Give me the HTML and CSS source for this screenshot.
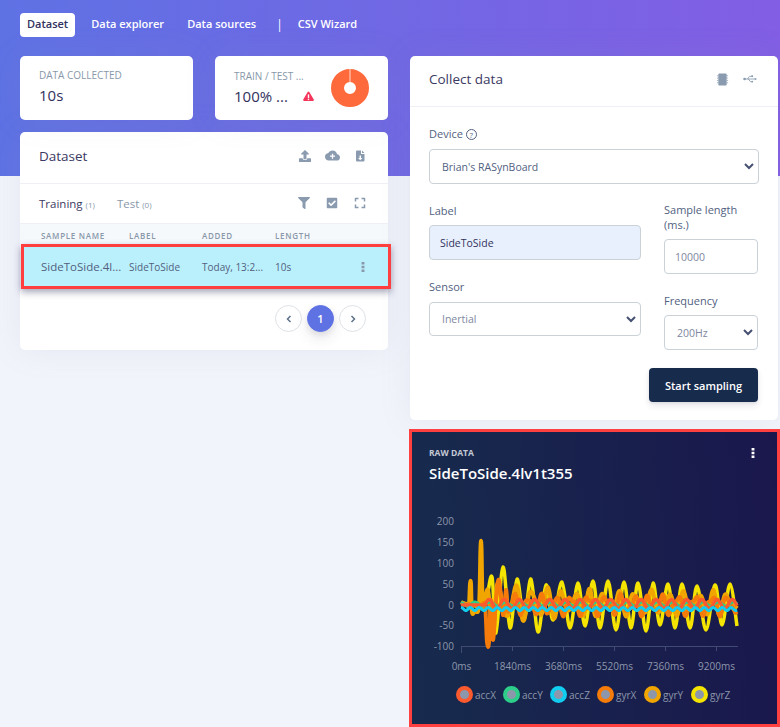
FILE: index.html
```html
<!DOCTYPE html>
<html lang="en">
<head>
    <meta charset="UTF-8">
    <meta name="viewport" content="width=device-width, initial-scale=1.0">
    <title>Data acquisition</title>
    <link rel="stylesheet" href="styles.css">
</head>
<body>
    <nav class="tabs">
        <a class="tab active">Dataset</a>
        <a class="tab">Data explorer</a>
        <a class="tab">Data sources</a>
        <span class="tab-sep">|</span>
        <a class="tab">CSV Wizard</a>
    </nav>

    <main class="columns">
        <section class="left-col">
            <div class="stats">
                <div class="card stat">
                    <div class="stat-label">DATA COLLECTED</div>
                    <div class="stat-value">10s</div>
                </div>
                <div class="card stat stat-split">
                    <div class="stat-text">
                        <div class="stat-label">TRAIN / TEST ...</div>
                        <div class="stat-value">100% ...
                            <svg class="warn" viewBox="0 0 24 22"><path fill="#f5365c" d="M12 1c.8 0 1.4.4 1.8 1.1l9.8 16.8c.8 1.4-.2 3.1-1.8 3.1H2.2C.6 22-.4 20.3.4 18.9L10.2 2.1C10.6 1.4 11.2 1 12 1z"/><rect x="10.5" y="7.5" width="3" height="8" fill="#fff"/><rect x="10.5" y="17" width="3" height="3" fill="#fff"/></svg>
                        </div>
                    </div>
                    <svg class="donut" viewBox="0 0 38 38">
                        <circle cx="19" cy="19" r="12.5" fill="none" stroke="#ff6a3d" stroke-width="13"/>
                        <rect x="18.5" y="0" width="1" height="13" fill="#ffd9cc"/>
                    </svg>
                </div>
            </div>

            <div class="card dataset">
                <div class="card-head dataset-head">
                    <h3>Dataset</h3>
                    <div class="head-icons">
                        <svg class="icon" viewBox="0 0 512 512"><path d="M296 384h-80c-13.3 0-24-10.7-24-24V192h-87.7c-17.8 0-26.7-21.5-14.1-34.1L242.3 5.7c7.5-7.5 19.8-7.5 27.3 0l152.2 152.2c12.6 12.6 3.7 34.1-14.1 34.1H320v168c0 13.3-10.7 24-24 24zm216-8v112c0 13.3-10.7 24-24 24H24c-13.3 0-24-10.7-24-24V376c0-13.3 10.7-24 24-24h136v8c0 30.9 25.1 56 56 56h80c30.9 0 56-25.1 56-56v-8h136c13.3 0 24 10.7 24 24z"/></svg>
                        <svg class="icon icon-wide" viewBox="0 0 24 24"><path fill-rule="evenodd" d="M19.35 10.04C18.67 6.59 15.64 4 12 4 9.11 4 6.6 5.64 5.35 8.04 2.34 8.36 0 10.91 0 14c0 3.31 2.69 6 6 6h13c2.76 0 5-2.24 5-5 0-2.64-2.05-4.78-4.65-4.96zM13 12h3v2h-3v3h-2v-3H8v-2h3V9h2z"/></svg>
                        <svg class="icon" viewBox="0 0 24 24"><path fill-rule="evenodd" d="M6 1h8v7h7v13a2 2 0 0 1-2 2H6a2 2 0 0 1-2-2V3a2 2 0 0 1 2-2zm5 10v5H8l4.5 4.5L17 16h-3v-5zM16 1l5 5h-5z"/></svg>
                    </div>
                </div>
                <div class="subtabs">
                    <span class="subtab current">Training <small>(1)</small></span>
                    <span class="subtab">Test <small>(0)</small></span>
                    <div class="head-icons">
                        <svg class="icon" viewBox="0 0 512 512"><path d="M487.976 0H24.028C2.71 0-8.047 25.866 7.058 40.971L192 225.941V432c0 7.831 3.821 15.17 10.237 19.662l80 55.98C298.02 518.69 320 507.493 320 487.98V225.941l184.947-184.97C520.021 25.896 509.338 0 487.976 0z"/></svg>
                        <svg class="icon" viewBox="0 0 448 512"><path d="M400 480H48c-26.51 0-48-21.49-48-48V80c0-26.51 21.49-48 48-48h352c26.51 0 48 21.49 48 48v352c0 26.51-21.49 48-48 48zm-204.686-98.059l184-184c6.248-6.248 6.248-16.379 0-22.627l-22.627-22.627c-6.248-6.248-16.379-6.249-22.628 0L184 302.745l-70.059-70.059c-6.248-6.248-16.379-6.248-22.628 0l-22.627 22.627c-6.248 6.248-6.248 16.379 0 22.627l104 104c6.249 6.25 16.379 6.25 22.628.001z"/></svg>
                        <svg class="icon" viewBox="0 0 448 512"><path d="M0 180V56c0-13.3 10.7-24 24-24h124c6.6 0 12 5.4 12 12v40c0 6.6-5.4 12-12 12H64v84c0 6.6-5.4 12-12 12H12c-6.6 0-12-5.4-12-12zM288 44v40c0 6.6 5.4 12 12 12h84v84c0 6.6 5.4 12 12 12h40c6.6 0 12-5.4 12-12V56c0-13.3-10.7-24-24-24H300c-6.6 0-12 5.4-12 12zm148 276h-40c-6.6 0-12 5.4-12 12v84h-84c-6.6 0-12 5.4-12 12v40c0 6.6 5.4 12 12 12h124c13.3 0 24-10.7 24-24V332c0-6.6-5.4-12-12-12zM160 468v-40c0-6.6-5.4-12-12-12H64v-84c0-6.6-5.4-12-12-12H12c-6.6 0-12 5.4-12 12v124c0 13.3 10.7 24 24 24h124c6.6 0 12-5.4 12-12z"/></svg>
                    </div>
                </div>
                <div class="table-head">
                    <span class="col-name">SAMPLE NAME</span>
                    <span class="col-label">LABEL</span>
                    <span class="col-added">ADDED</span>
                    <span class="col-length">LENGTH</span>
                </div>
                <div class="table-row">
                    <span class="col-name row-name">SideToSide.4l...</span>
                    <span class="col-label">SideToSide</span>
                    <span class="col-added">Today, 13:2...</span>
                    <span class="col-length">10s</span>
                    <svg class="kebab" viewBox="0 0 4 14"><rect y="0" width="4" height="3.5" x="0"/><rect y="5.25" width="4" height="3.5" x="0"/><rect y="10.5" width="4" height="3.5" x="0"/></svg>
                </div>
                <div class="pager">
                    <button class="page-btn"><svg viewBox="0 0 8 10"><path d="M6 1 2 5l4 4" fill="none" stroke="#5e7289" stroke-width="2"/></svg></button>
                    <button class="page-btn page-on">1</button>
                    <button class="page-btn"><svg viewBox="0 0 8 10"><path d="M2 1l4 4-4 4" fill="none" stroke="#5e7289" stroke-width="2"/></svg></button>
                </div>
            </div>
        </section>

        <section class="right-col">
            <div class="card collect">
                <div class="card-head collect-head">
                    <h3>Collect data</h3>
                    <div class="head-icons head-icons-small">
                        <svg class="icon icon-chip" viewBox="0 0 14 14"><path d="M2.5 1.5a1 1 0 0 1 1-1h7a1 1 0 0 1 1 1v11a1 1 0 0 1-1 1h-7a1 1 0 0 1-1-1z"/><path d="M1 3h1.5M1 5.5h1.5M1 8h1.5M1 10.5h1.5M11.5 3H13M11.5 5.5H13M11.5 8H13M11.5 10.5H13" stroke="#8a9bb0" stroke-width=".8"/></svg>
                        <svg class="icon icon-usb" viewBox="0 0 16 12"><circle cx="1.8" cy="6" r="1.5"/><path d="M2 6h12M5 6l2.5-3H10M6 6l2.5 3H10" fill="none" stroke="#8a9bb0"/><rect x="9.5" y="1.8" width="2" height="2"/><circle cx="10.5" cy="9" r="1.1"/><path d="M13.5 4.5 16 6l-2.5 1.500z"/></svg>
                    </div>
                </div>
                <div class="form">
                    <label class="field-label">Device <span class="help">?</span></label>
                    <select class="control">
                        <option>Brian's RASynBoard</option>
                    </select>
                    <div class="form-cols">
                        <div class="form-col-main">
                            <label class="field-label label-first">Label</label>
                            <input class="control control-filled" type="text" value="SideToSide">
                            <label class="field-label label-sensor">Sensor</label>
                            <select class="control control-muted">
                                <option>Inertial</option>
                            </select>
                        </div>
                        <div class="form-col-side">
                            <label class="field-label label-length">Sample length (ms.)</label>
                            <input class="control control-muted" type="text" value="10000">
                            <label class="field-label label-freq">Frequency</label>
                            <select class="control control-muted">
                                <option>200Hz</option>
                            </select>
                        </div>
                    </div>
                    <div class="form-actions">
                        <button class="start-btn">Start sampling</button>
                    </div>
                </div>
            </div>

            <div class="raw-card">
                <div class="raw-head">
                    <div>
                        <div class="raw-over">RAW DATA</div>
                        <div class="raw-title">SideToSide.4lv1t355</div>
                    </div>
                    <svg class="kebab kebab-light" viewBox="0 0 4 14"><rect y="0" width="4" height="3.5" x="0"/><rect y="5.25" width="4" height="3.5" x="0"/><rect y="10.5" width="4" height="3.5" x="0"/></svg>
                </div>
                <!-- viewBox uses page coordinates so the axis values are easy to read off -->
                <svg id="chart" class="chart" viewBox="412 510 365 165">
                    <g class="axis-y" text-anchor="end">
                        <text x="454" y="525">200</text>
                        <text x="454" y="546">150</text>
                        <text x="454" y="567">100</text>
                        <text x="454" y="588">50</text>
                        <text x="454" y="609">0</text>
                        <text x="454" y="629">-50</text>
                        <text x="454" y="650">-100</text>
                    </g>
                    <path class="axis-line" d="M461 646.5H738M461.5 646v7M512.5 646v5M563.5 646v5M614.5 646v5M665.5 646v5M716.5 646v5"/>
                    <g class="axis-x" text-anchor="middle">
                        <text x="461.5" y="670">0ms</text>
                        <text x="512.5" y="670">1840ms</text>
                        <text x="563.5" y="670">3680ms</text>
                        <text x="614.5" y="670">5520ms</text>
                        <text x="665.5" y="670">7360ms</text>
                        <text x="716.5" y="670">9200ms</text>
                    </g>
                </svg>
                <div class="legend">
                    <span class="legend-item"><i class="dot dot-accx"></i>accX</span>
                    <span class="legend-item"><i class="dot dot-accy"></i>accY</span>
                    <span class="legend-item"><i class="dot dot-accz"></i>accZ</span>
                    <span class="legend-item"><i class="dot dot-gyrx"></i>gyrX</span>
                    <span class="legend-item"><i class="dot dot-gyry"></i>gyrY</span>
                    <span class="legend-item"><i class="dot dot-gyrz"></i>gyrZ</span>
                </div>
            </div>
        </section>
    </main>

    <script src="chart.js"></script>
</body>
</html>
```

FILE: styles.css
```css
/* Base */
html, body {
    margin: 0;
    padding: 0;
    height: 727px;
    overflow: hidden;
}

body {
    font-family: "Open Sans", sans-serif;
    color: #32325d;
    background: linear-gradient(87deg, #5e72e4, #825ee4) no-repeat top / 100% 176px, #f2f4fb;
}

/* Top tabs */
.tabs {
    display: flex;
    align-items: center;
    height: 24px;
    padding: 13px 20px 0;
}

.tab {
    font-size: 11px;
    font-weight: 600;
    color: #fff;
    padding: 3px 7px 5px;
    margin-right: 9px;
    line-height: 16px;
}

.tab.active {
    background: #fff;
    color: #32325d;
    border-radius: 4px;
}

.tab-sep {
    color: #fff;
    font-size: 12px;
    margin: -2px 8px 0 4px;
}

/* Layout */
.columns {
    display: grid;
    grid-template-columns: 368px 368px;
    gap: 22px;
    padding: 19px 0 0 20px;
}

.card {
    background: #fff;
    border-radius: 5px;
    box-shadow: 0 0 2rem 0 rgba(136, 152, 170, .12);
}

.stats {
    display: flex;
    justify-content: space-between;
    margin-bottom: 12px;
}

.stat {
    width: 173px;
    height: 64px;
    box-sizing: border-box;
    padding: 12px 19px;
}

.stat-split {
    display: flex;
    justify-content: space-between;
    align-items: center;
    padding-right: 0;
}

.stat-text {
    flex: 1;
}

.stat-label {
    font-size: 10px;
    font-weight: 500;
    color: #8898aa;
    line-height: 15px;
}

.stat-value {
    font-size: 15px;
    line-height: 23px;
    margin-top: 1px;
    display: flex;
    align-items: center;
}

.warn {
    width: 11px;
    height: 10px;
    margin-left: 15px;
}

.donut {
    width: 38px;
    height: 38px;
    margin-right: 19px;
}

/* Card header */
.card-head {
    display: flex;
    align-items: center;
    justify-content: space-between;
    padding: 0 22px 4px 19px;
    border-bottom: 1px solid #eef0f5;
}

.dataset-head {
    height: 47px;
}

.collect-head {
    height: 46px;
    padding-right: 19px;
}

.card-head h3 {
    margin: 0;
    font-size: 13.5px;
    font-weight: 500;
    color: #3b3a62;
}

.head-icons {
    display: flex;
    align-items: center;
    gap: 16px;
    margin-left: auto;
}

.card-head .head-icons {
    gap: 14px;
}

.icon {
    width: 12px;
    height: 12px;
    fill: #8a9bb0;
}

.icon-wide {
    width: 15px;
    height: 15px;
}

.icon-chip {
    width: 13px;
    height: 13px;
}

.icon-usb {
    width: 14px;
    height: 12px;
}

.head-icons-small {
    margin-right: 2px;
}

/* Dataset card */
.dataset {
    height: 218px;
}

.subtabs {
    display: flex;
    align-items: center;
    height: 38px;
    padding: 0 22px 1px 19px;
}

.subtab {
    font-size: 11.5px;
    color: #8898aa;
    margin-right: 22px;
}

.subtab.current {
    color: #3b3a62;
}

.subtab small {
    font-size: 8px;
    color: #8898aa;
}

.table-head {
    display: flex;
    align-items: center;
    height: 17px;
    padding-top: 3px;
    background: #f6f9fc;
    border-top: 1px solid #eef0f5;
    font-size: 8px;
    font-weight: 600;
    letter-spacing: .7px;
    color: #8898aa;
}

.col-name { width: 88px; margin-left: 21px; }
.col-label { width: 73px; }
.col-added { width: 73px; }
.col-length { width: 40px; }

.table-row {
    display: flex;
    align-items: center;
    box-sizing: border-box;
    height: 45px;
    margin: 0 -3px 0 1px;
    border: 3px solid #ff3f3f;
    background: #baf0fc;
    box-shadow: 0 3px 7px rgba(50, 50, 93, .45);
    font-size: 10px;
    color: #525f7f;
}

.table-row .col-name {
    margin-left: 17px;
}

.row-name {
    font-size: 11.5px;
    font-weight: 500;
}

.kebab {
    width: 4px;
    height: 10px;
    margin-left: 46px;
    fill: #8a98ab;
}

.pager {
    display: flex;
    justify-content: flex-end;
    gap: 5px;
    padding: 16px 22px 0 0;
}

.page-btn {
    width: 27px;
    height: 27px;
    padding: 0;
    border: 1px solid #dee2e6;
    border-radius: 50%;
    background: #fff;
    font-family: inherit;
    font-size: 11px;
    display: flex;
    align-items: center;
    justify-content: center;
}

.page-btn svg {
    width: 6px;
    height: 8px;
}

.page-on {
    background: #5e72e4;
    border-color: #5e72e4;
    color: #fff;
    font-weight: 600;
    box-shadow: 0 7px 14px rgba(50, 50, 93, .1), 0 3px 6px rgba(0, 0, 0, .08);
}

/* Collect data card */
.collect {
    height: 364px;
}

.form {
    padding: 19px 19px 0;
}

.field-label {
    display: block;
    font-size: 11px;
    line-height: 16px;
    color: #525f7f;
    margin-bottom: 7px;
}

.help {
    display: inline-block;
    box-sizing: border-box;
    width: 11px;
    height: 11px;
    line-height: 9px;
    border: 1px solid #525f7f;
    border-radius: 50%;
    font-size: 8px;
    text-align: center;
}

.control {
    display: block;
    box-sizing: border-box;
    width: 100%;
    height: 35px;
    padding: 0 10px;
    border: 1px solid #cad1d7;
    border-radius: 4px;
    background: #fff;
    font-family: inherit;
    font-size: 10.5px;
    color: #525f7f;
    outline: none;
}

select.control {
    appearance: none;
    padding: 0 24px 0 12px;
    background: #fff url("data:image/svg+xml,%3Csvg xmlns='http://www.w3.org/2000/svg' width='10' height='7'%3E%3Cpath d='M1 1l4 4 4-4' fill='none' stroke='%23465070' stroke-width='2'/%3E%3C/svg%3E") no-repeat right 4px center;
}

.form > select.control {
    width: 330px;
}

.control-filled {
    background: #e8f0fe;
    color: #32325d;
}

.control-muted {
    color: #8087a0;
}

.form-cols {
    display: flex;
    gap: 23px;
}

.form-col-main {
    width: 212px;
}

.form-col-side {
    width: 94px;
}

.label-first {
    margin: 19px 0 6px;
}

.label-sensor {
    margin-top: 19px;
}

.label-sensor + .control {
    height: 34px;
}

.label-length {
    margin-top: 18px;
    line-height: 15px;
}

.label-freq {
    margin: 19px 0 6px;
}

.form-actions {
    display: flex;
    justify-content: flex-end;
    margin: 18px 1px 0 0;
}

.start-btn {
    width: 109px;
    height: 34px;
    border: 0;
    border-radius: 4px;
    background: #172b4d;
    color: #fff;
    font-family: inherit;
    font-size: 11px;
    font-weight: 600;
    box-shadow: 0 4px 6px rgba(50, 50, 93, .11), 0 1px 3px rgba(0, 0, 0, .08);
}

/* Raw data card */
.raw-card {
    box-sizing: border-box;
    width: 371px;
    height: 298px;
    margin: 9px 0 0 -1px;
    border: 3px solid #ff4040;
    background: linear-gradient(87deg, #172b4d, #1a174d);
    color: #fff;
}

.raw-head {
    display: flex;
    justify-content: space-between;
    padding: 15px 22px 0 17px;
}

.raw-over {
    font-size: 8.5px;
    font-weight: 700;
    color: #c3c8d4;
    line-height: 12px;
}

.raw-title {
    font-size: 15px;
    font-weight: 600;
    line-height: 22px;
    margin-top: 3px;
}

.kebab-light {
    margin: 1px 0 0;
    fill: #fff;
}

.chart {
    display: block;
    width: 365px;
    height: 165px;
    margin-top: 26px;
}

.chart text {
    font-size: 10px;
    fill: #8d97ab;
}

.axis-line {
    stroke: #414a72;
    stroke-width: 1;
    fill: none;
}

/* Legend */
.legend {
    display: flex;
    gap: 5px;
    padding: 11px 0 0 44px;
    font-size: 10px;
    color: #8d97ab;
}

.legend-item {
    display: flex;
    align-items: center;
    width: 42px;
}

.dot {
    box-sizing: border-box;
    width: 17px;
    height: 17px;
    margin-right: 2px;
    flex: none;
    border-radius: 50%;
    border: 4px solid;
    background: #8d97ab;
}

.dot-accx { border-color: #fb5a2e; }
.dot-accy { border-color: #2dce89; }
.dot-accz { border-color: #11cdef; }
.dot-gyrx { border-color: #f57c0a; }
.dot-gyry { border-color: #f0a500; }
.dot-gyrz { border-color: #f5e400; }
```

FILE: chart.js
```js
// Draws the six sensor traces into the raw data chart.
const chart = document.getElementById('chart');
const X_START = 461;
const X_END = 737;
const TWO_PI = Math.PI * 2;

// Yellow trace follows hand-read peaks, so it goes through Catmull-Rom knots
const gyrZ = [[461,603],[470,604],[478,606],[486,600],[492,577],[496,633],[503,567],[510,628],[517,579],[524,620],
    [531,579],[538,632],[546,585],[553,620],[562,582],[570,628],[578,583],[585,626],[593,581],[600,628],
    [608,581],[616,630],[624,582],[631,628],[638,583],[646,631],[653,583],[660,625],[668,584],[675,628],
    [682,584],[690,628],[697,586],[706,630],[715,585],[722,625],[730,584],[737,626]];

function wave(fn) {
    const points = [];
    for (let x = X_START; x <= X_END; x += 1.5) {
        points.push([x, fn(x)]);
    }
    return points;
}

function spikes(points, list) {
    // Replace the early part of a trace with hand-read knots
    const cut = list[list.length - 1][0];
    return list.concat(points.filter(p => p[0] > cut));
}

// Amber drifts in and out of step with the yellow, taller near the start of the recording
const gyrY = spikes(wave(x => 603
        - (9 + 9 * Math.exp(-(x - 500) / 50)) * Math.sin(x * TWO_PI / 15.2 + 2.5 + Math.sin(x / 23))
        - 4 * Math.sin(x * TWO_PI / 10.3)),
    [[461,602],[468,606],[469,606],[470,584],[471,584],[472,612],[475,611],[479,606],[480.5,548],[481.5,548],[483,606],
     [488,590],[493,638],[497,585],[502,600]]);

const gyrX = spikes(wave(x => 605
        - 8 * Math.sin(x * TWO_PI / 15.2 + 3.4 + Math.sin(x / 17))
        - 3.5 * Math.sin(x * TWO_PI / 8.7)),
    [[461,604],[480,605],[485,606],[487,642],[489,642],[491,600],[493,640],[496,600],[499,580],[503,615],[506,590]]);

const accY = wave(x => 604 - 2 * Math.sin(x * TWO_PI / 15.2));
const accX = spikes(wave(x => 604 - 4.5 * Math.sin(x * TWO_PI / 15.2 + 0.5)), [[461,605],[484,605]]);
const accZ = wave(x => 609 - 1.6 * Math.sin(x * TWO_PI / 9));

function smoothPath(points) {
    let d = `M${points[0][0]} ${points[0][1]}`;
    for (let i = 0; i < points.length - 1; i++) {
        const p0 = points[Math.max(i - 1, 0)];
        const p1 = points[i];
        const p2 = points[i + 1];
        const p3 = points[Math.min(i + 2, points.length - 1)];
        const c1x = p1[0] + (p2[0] - p0[0]) / 6;
        const c1y = p1[1] + (p2[1] - p0[1]) / 6;
        const c2x = p2[0] - (p3[0] - p1[0]) / 6;
        const c2y = p2[1] - (p3[1] - p1[1]) / 6;
        d += `C${c1x.toFixed(1)} ${c1y.toFixed(1)} ${c2x.toFixed(1)} ${c2y.toFixed(1)} ${p2[0]} ${p2[1].toFixed(1)}`;
    }
    return d;
}

function addTrace(points, color, width) {
    const path = document.createElementNS('http://www.w3.org/2000/svg', 'path');
    path.setAttribute('d', smoothPath(points));
    path.setAttribute('fill', 'none');
    path.setAttribute('stroke', color);
    path.setAttribute('stroke-width', width);
    chart.appendChild(path);
}

addTrace(gyrZ, '#f5e400', 3.5);
addTrace(gyrY, '#f0a500', 4);
addTrace(gyrX, '#f57c0a', 4);
addTrace(accY, '#2dce89', 3);
addTrace(accX, '#fb5a2e', 3.5);
addTrace(accZ, '#11cdef', 3);
```
